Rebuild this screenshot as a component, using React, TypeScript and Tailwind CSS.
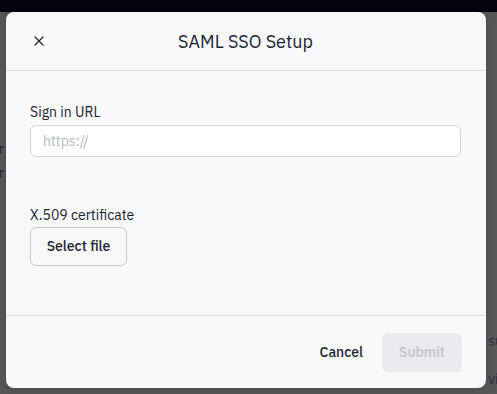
import { X } from 'lucide-react'

const FONT = { fontFamily: '"IBM Plex Sans", Inter, "Noto Sans", sans-serif' }

export default function App() {
    return (
        <div className="relative w-[497px] h-[394px] overflow-hidden bg-[#575757]" style={FONT}>
            {/* page behind the overlay */}
            <div className="h-3 bg-[#03040e]" />
            <div className="flex justify-between text-[14px] text-[#1f2a3a]">
                <div className="flex flex-col -ml-[9px] pt-[12px] gap-[2px] leading-[22px]">
                    <span>n</span>
                    <span className="mt-[90px]">er</span>
                    <span>er</span>
                </div>
                <div className="flex flex-col -mr-[6px] pt-[318px] gap-[16px] leading-[22px] text-[#26303f]">
                    <span>su</span>
                    <span>vi</span>
                </div>
            </div>

            {/* modal */}
            <div className="absolute left-[6px] top-[12px] w-[480px] h-[376px] bg-[#f9f9fb] rounded-[8px] flex flex-col shadow-[0_2px_8px_rgba(0,0,0,0.15)]">
                <div className="h-[59px] flex items-center border-b border-[#dcdae3] px-6">
                    <button className="w-5 h-5 flex items-center justify-center -ml-[1px] text-[#1c2330]">
                        <X size={16} strokeWidth={1.8} />
                    </button>
                    <h1 className="flex-1 text-center text-[18px] text-[#1c2433] -ml-5">SAML SSO Setup</h1>
                </div>

                <div className="flex-1 flex flex-col px-6 pt-[31px] border-b border-[#dcdae3]">
                    <label className="text-[14px] leading-[20px] text-[#1c2433]">Sign in URL</label>
                    <input
                        className="mt-[3px] h-[32px] w-[431px] rounded-[6px] border border-[#d4d2dc] bg-white px-3 text-[14px] outline-none placeholder:text-[#b6b8c4]"
                        placeholder="https://"
                    />
                    <label className="mt-[48px] text-[14px] leading-[20px] text-[#1c2433]">X.509 certificate</label>
                    <button className="mt-[2px] w-[97px] h-[39px] rounded-[6px] border border-[#c9c7d1] text-[14px] font-medium text-[#1c2433]">
                        Select file
                    </button>
                </div>

                <div className="h-[72px] flex items-center justify-end gap-[19px] px-6">
                    <button className="text-[14px] font-medium text-[#1c2433]">Cancel</button>
                    <button className="w-[80px] h-[39px] rounded-[6px] bg-[#ebebef] text-[14px] font-medium text-[#c2c1ca]" disabled>
                        Submit
                    </button>
                </div>
            </div>
        </div>
    )
}
